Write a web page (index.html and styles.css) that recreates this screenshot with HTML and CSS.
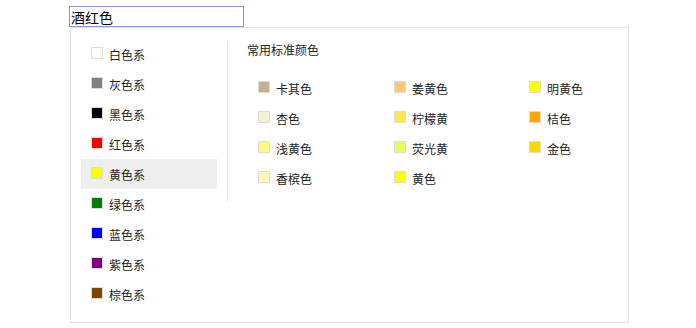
FILE: index.html
```html
<!DOCTYPE html>
<html lang="zh-CN">
<head>
    <meta charset="UTF-8">
    <meta name="viewport" content="width=device-width, initial-scale=1.0">
    <title>颜色选择</title>
    <link rel="stylesheet" href="styles.css">
</head>
<body>
<div class="picker">
    <input type="text" class="color-input" value="酒红色">
    <div class="panel">
        <ul class="family-list">
            <li class="family-item"><span class="swatch" style="background: #ffffff;"></span>白色系</li>
            <li class="family-item"><span class="swatch" style="background: #808080;"></span>灰色系</li>
            <li class="family-item"><span class="swatch" style="background: #000000;"></span>黑色系</li>
            <li class="family-item"><span class="swatch" style="background: #ff0000;"></span>红色系</li>
            <li class="family-item active"><span class="swatch" style="background: #ffff00;"></span>黄色系</li>
            <li class="family-item"><span class="swatch" style="background: #008000;"></span>绿色系</li>
            <li class="family-item"><span class="swatch" style="background: #0000ff;"></span>蓝色系</li>
            <li class="family-item"><span class="swatch" style="background: #800080;"></span>紫色系</li>
            <li class="family-item"><span class="swatch" style="background: #7b4800;"></span>棕色系</li>
        </ul>
        <div class="standard">
            <h3>常用标准颜色</h3>
            <ul class="color-grid">
                <li class="color-item"><span class="swatch" style="background: #c4b190;"></span>卡其色</li>
                <li class="color-item"><span class="swatch" style="background: #ffc772;"></span>姜黄色</li>
                <li class="color-item"><span class="swatch" style="background: #ffff00;"></span>明黄色</li>
                <li class="color-item"><span class="swatch" style="background: #f6efd8;"></span>杏色</li>
                <li class="color-item"><span class="swatch" style="background: #ffe84c;"></span>柠檬黄</li>
                <li class="color-item"><span class="swatch" style="background: #ffa500;"></span>桔色</li>
                <li class="color-item"><span class="swatch" style="background: #fbfb78;"></span>浅黄色</li>
                <li class="color-item"><span class="swatch" style="background: #e8ff55;"></span>荧光黄</li>
                <li class="color-item"><span class="swatch" style="background: #ffd700;"></span>金色</li>
                <li class="color-item"><span class="swatch" style="background: #fff6b6;"></span>香槟色</li>
                <li class="color-item"><span class="swatch" style="background: #ffff00;"></span>黄色</li>
            </ul>
        </div>
    </div>
</div>
</body>
</html>
```

FILE: styles.css
```css
body {
    margin: 0;
    padding: 0;
    background-color: #fff;
    font-family: "Noto Sans CJK SC", "Noto Sans", sans-serif;
    color: #333;
}

.picker {
    padding: 6px 0 0 69px;
}

.color-input {
    display: block;
    box-sizing: border-box;
    width: 175px;
    height: 21px;
    margin: 0;
    padding: 0 1px;
    border: 1px solid #7d9fd6;
    font-family: "Noto Sans CJK SC", sans-serif;
    font-size: 14px;
    color: #000;
    outline: none;
}

.panel {
    display: flex;
    box-sizing: border-box;
    width: 559px;
    height: 296px;
    margin-left: 1px;
    border: 1px solid #e3e3e3;
}

ul {
    list-style: none;
    margin: 0;
    padding: 0;
}

.swatch {
    display: inline-block;
    box-sizing: border-box;
    width: 12px;
    height: 12px;
    border: 1px solid #dcdcdc;
    margin-right: 6px;
    position: relative;
    top: -1px;
}

.family-list {
    width: 136px;
    padding: 11px 10px 0 10px;
}

.family-item {
    display: flex;
    align-items: center;
    height: 30px;
    padding-left: 10px;
    font-size: 12px;
    color: #222;
}

.family-item.active {
    background-color: #eeeeee;
}

.standard {
    width: 380px;
    height: 160px;
    margin-top: 14px;
    padding-left: 19px;
    border-left: 1px solid #e6e6e6;
}

.standard h3 {
    margin: 1px 0 0 0;
    font-size: 12px;
    font-weight: normal;
    line-height: 14px;
    color: #222;
}

.color-grid {
    display: grid;
    grid-template-columns: 136px 135px 136px;
    margin-top: 16px;
    padding-left: 11px;
}

.color-item {
    display: flex;
    align-items: center;
    height: 30px;
    font-size: 12px;
    color: #222;
}
```
